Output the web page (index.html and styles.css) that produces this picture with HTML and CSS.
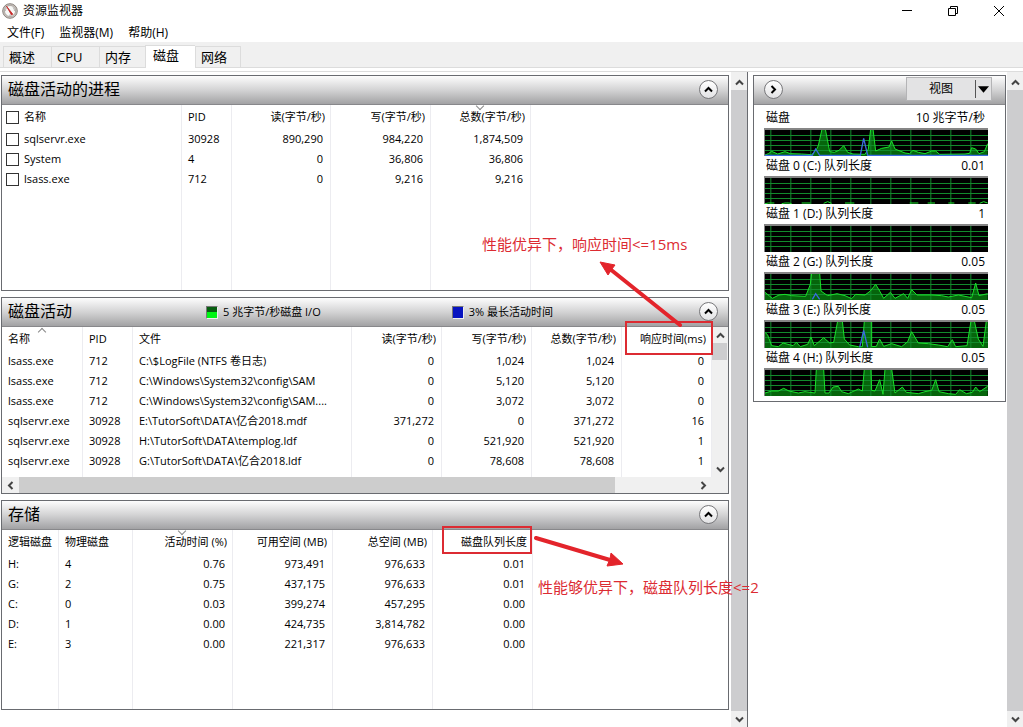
FILE: index.html
```html
<!DOCTYPE html>
<html lang="zh-CN">
	<head>
		<meta charset="utf-8">
		<title>资源监视器</title>
		<link rel="stylesheet" href="styles.css">
	</head>
	<body>
		<svg class="defs" width="0" height="0" aria-hidden="true">
			<defs>
				<pattern id="grid" width="60" height="81" x="16" patternUnits="userSpaceOnUse">
					<path d="M1.5 0V81M0 19.5H60M0 34.5H60M0 49.5H60M0 64.5H60" stroke="#128a2c" stroke-width="3" fill="none"/>
				</pattern>
			</defs>
			<symbol id="up" viewBox="0 0 9 9"><path d="M1 6.5L4.500 3L8 6.500" fill="none" stroke="currentColor" stroke-width="2"/></symbol>
			<symbol id="down" viewBox="0 0 9 9"><path d="M1 2.500L4.500 6L8 2.500" fill="none" stroke="currentColor" stroke-width="2"/></symbol>
			<symbol id="left" viewBox="0 0 9 9"><path d="M6.500 1L3 4.500L6.500 8" fill="none" stroke="currentColor" stroke-width="2"/></symbol>
			<symbol id="right" viewBox="0 0 9 9"><path d="M2.500 1L6 4.500L2.500 8" fill="none" stroke="currentColor" stroke-width="2"/></symbol>
		</svg>

		<header class="titlebar">
			<svg class="logo" viewBox="0 0 16 16" aria-hidden="true">
				<circle cx="8" cy="8" r="7.300" fill="#c9c3be" stroke="#8a837e"/>
				<circle cx="8" cy="8" r="5.500" fill="#f8f8f6" stroke="#8e8782" stroke-width=".6"/>
				<path d="M3.500 8a4.500 4.500 0 0 1 1-3M11 4.500A4.500 4.500 0 0 1 12.500 8M7 12.200h2" stroke="#aaa" fill="none" stroke-width=".8"/>
				<path d="M4.500 3.200L10.800 11.200L9.500 12Z" fill="#c42323" stroke="#c42323" stroke-width=".8"/>
			</svg>
			<h1>资源监视器</h1>
			<div class="window-buttons">
				<button aria-label="最小化"><svg viewBox="0 0 12 12"><path d="M1 5.500H11" /></svg></button>
				<button aria-label="还原"><svg viewBox="0 0 12 12"><path d="M1.500 3.500H8.500V10.500H1.500ZM3.500 3.500V1.500H10.500V8.500H8.500"/></svg></button>
				<button aria-label="关闭"><svg viewBox="0 0 12 12"><path d="M1 1L11 11M11 1L1 11"/></svg></button>
			</div>
		</header>
		<nav class="menu">
			<button>文件(F)</button>
			<button>监视器(M)</button>
			<button>帮助(H)</button>
		</nav>
		<div class="tabs" role="tablist">
			<button role="tab">概述</button>
			<button role="tab">CPU</button>
			<button role="tab">内存</button>
			<button role="tab" class="active" aria-selected="true">磁盘</button>
			<button role="tab">网络</button>
		</div>
		<div class="strip"></div>

		<main>
			<div class="panels">
				<section class="panel">
					<div class="panel-head">
						<h2>磁盘活动的进程</h2>
						<button class="round" aria-label="折叠"><svg><use href="#up"/></svg></button>
					</div>
					<table>
						<colgroup><col class="w180"><col class="w50"><col class="w99"><col class="w100"><col class="w100"><col></colgroup>
						<thead>
							<tr>
								<th><label><input type="checkbox">名称</label></th>
								<th>PID</th>
								<th class="num">读(字节/秒)</th>
								<th class="num">写(字节/秒)</th>
								<th class="num sort-down">总数(字节/秒)</th>
								<th></th>
							</tr>
						</thead>
						<tbody>
							<tr><td><label><input type="checkbox">sqlservr.exe</label></td><td>30928</td><td class="num">890,290</td><td class="num">984,220</td><td class="num">1,874,509</td><td></td></tr>
							<tr><td><label><input type="checkbox">System</label></td><td>4</td><td class="num">0</td><td class="num">36,806</td><td class="num">36,806</td><td></td></tr>
							<tr><td><label><input type="checkbox">lsass.exe</label></td><td>712</td><td class="num">0</td><td class="num">9,216</td><td class="num">9,216</td><td></td></tr>
							<tr class="rest tall"><td></td><td></td><td></td><td></td><td></td><td></td></tr>
						</tbody>
					</table>
				</section>

				<section class="panel">
					<div class="panel-head">
						<h2>磁盘活动</h2>
						<span class="legend"><i class="swatch green"></i>5 兆字节/秒磁盘 I/O</span>
						<span class="legend"><i class="swatch blue"></i>3% 最长活动时间</span>
						<button class="round" aria-label="折叠"><svg><use href="#up"/></svg></button>
					</div>
					<div class="scroll-area">
						<table class="activity">
							<colgroup><col class="w80"><col class="w50"><col><col class="w90"><col class="w90"><col class="w90"><col class="w90"></colgroup>
							<thead>
								<tr>
									<th class="sort-up">名称</th>
									<th>PID</th>
									<th>文件</th>
									<th class="num">读(字节/秒)</th>
									<th class="num">写(字节/秒)</th>
									<th class="num">总数(字节/秒)</th>
									<th class="num marked">响应时间(ms)</th>
								</tr>
							</thead>
							<tbody>
								<tr><td>lsass.exe</td><td>712</td><td>C:\$LogFile (NTFS 卷日志)</td><td class="num">0</td><td class="num">1,024</td><td class="num">1,024</td><td class="num">0</td></tr>
								<tr><td>lsass.exe</td><td>712</td><td>C:\Windows\System32\config\SAM</td><td class="num">0</td><td class="num">5,120</td><td class="num">5,120</td><td class="num">0</td></tr>
								<tr><td>lsass.exe</td><td>712</td><td>C:\Windows\System32\config\SAM....</td><td class="num">0</td><td class="num">3,072</td><td class="num">3,072</td><td class="num">0</td></tr>
								<tr><td>sqlservr.exe</td><td>30928</td><td>E:\TutorSoft\DATA\亿合2018.mdf</td><td class="num">371,272</td><td class="num">0</td><td class="num">371,272</td><td class="num">16</td></tr>
								<tr><td>sqlservr.exe</td><td>30928</td><td>H:\TutorSoft\DATA\templog.ldf</td><td class="num">0</td><td class="num">521,920</td><td class="num">521,920</td><td class="num">1</td></tr>
								<tr><td>sqlservr.exe</td><td>30928</td><td>G:\TutorSoft\DATA\亿合2018.ldf</td><td class="num">0</td><td class="num">78,608</td><td class="num">78,608</td><td class="num">1</td></tr>
								<tr class="rest"><td></td><td></td><td></td><td></td><td></td><td></td><td></td></tr>
							</tbody>
						</table>
						<div class="scrollbar inner">
							<button aria-label="向上"><svg><use href="#up"/></svg></button>
							<div class="thumb"></div>
							<button aria-label="向下"><svg><use href="#down"/></svg></button>
						</div>
					</div>
					<div class="hscroll">
						<button aria-label="向左"><svg><use href="#left"/></svg></button>
						<div class="thumb"></div>
						<button aria-label="向右"><svg><use href="#right"/></svg></button>
					</div>
				</section>

				<section class="panel">
					<div class="panel-head">
						<h2>存储</h2>
						<button class="round" aria-label="折叠"><svg><use href="#up"/></svg></button>
					</div>
					<table>
						<colgroup><col class="w56"><col class="w74"><col class="w100"><col class="w100"><col class="w100"><col class="w100"><col></colgroup>
						<thead>
							<tr>
								<th>逻辑磁盘</th>
								<th>物理磁盘</th>
								<th class="num sort-down">活动时间 (%)</th>
								<th class="num">可用空间 (MB)</th>
								<th class="num">总空间 (MB)</th>
								<th class="num marked">磁盘队列长度</th>
								<th></th>
							</tr>
						</thead>
						<tbody>
							<tr><td>H:</td><td>4</td><td class="num">0.76</td><td class="num">973,491</td><td class="num">976,633</td><td class="num">0.01</td><td></td></tr>
							<tr><td>G:</td><td>2</td><td class="num">0.75</td><td class="num">437,175</td><td class="num">976,633</td><td class="num">0.01</td><td></td></tr>
							<tr><td>C:</td><td>0</td><td class="num">0.03</td><td class="num">399,274</td><td class="num">457,295</td><td class="num">0.00</td><td></td></tr>
							<tr><td>D:</td><td>1</td><td class="num">0.00</td><td class="num">424,735</td><td class="num">3,814,782</td><td class="num">0.00</td><td></td></tr>
							<tr><td>E:</td><td>3</td><td class="num">0.00</td><td class="num">221,317</td><td class="num">976,633</td><td class="num">0.00</td><td></td></tr>
							<tr class="rest medium"><td></td><td></td><td></td><td></td><td></td><td></td><td></td></tr>
						</tbody>
					</table>
				</section>
			</div>

			<div class="scrollbar">
				<button aria-label="向上"><svg><use href="#up"/></svg></button>
				<div class="thumb"></div>
				<button aria-label="向下"><svg><use href="#down"/></svg></button>
			</div>

			<aside>
				<div class="panel">
					<div class="panel-head">
						<button class="round" aria-label="展开"><svg><use href="#right"/></svg></button>
						<div class="view">
							<button>视图</button>
							<button class="drop" aria-label="视图选项"><svg viewBox="0 0 10 6"><path d="M0 0H10L5 6Z"/></svg></button>
						</div>
					</div>
					<div class="charts">
						<div class="chart-label"><span>磁盘</span><span>10 兆字节/秒</span></div>
						<svg class="chart" viewBox="0 3 669 78" preserveAspectRatio="none">
							<path class="area" d="M0 78L10 74L20 67L38 75L60 68L76 74L110 75L140 77L154 62L160 50L171 0H181L194 68L208 70L222 64L236 50L248 70L264 75L300 76L310 60L317 0H324L332 66L350 58L372 54L380 36L390 60L420 72L434 74L444 64L460 70L480 74L500 66L512 66L524 76L600 75L614 73L620 56L632 60L642 74L658 68L668 44V81H0Z"/>
							<rect width="669" height="81" fill="url(#grid)"/>
							<path class="line" d="M0 78L10 74L20 67L38 75L60 68L76 74L110 75L140 77L154 62L160 50L171 0M181 0L194 68L208 70L222 64L236 50L248 70L264 75L300 76L310 60L317 0M324 0L332 66L350 58L372 54L380 36L390 60L420 72L434 74L444 64L460 70L480 74L500 66L512 66L524 76L600 75L614 73L620 56L632 60L642 74L658 68L668 44"/>
							<path class="busy" d="M0 79H142L152 60L164 79H286L296 28L308 79H669"/>
						</svg>
						<div class="chart-label"><span>磁盘 0 (C:) 队列长度</span><span>0.01</span></div>
						<svg class="chart" viewBox="0 3 669 78" preserveAspectRatio="none">
							<rect width="669" height="81" fill="url(#grid)"/>
							<path class="line" d="M0 80L10 78H28M50 80L60 78H72L80 80M110 78H136M176 79L188 74L200 79M240 78H268M434 78H460M488 78H510M550 78H568M610 78H632M644 79L656 74L668 78"/>
						</svg>
						<div class="chart-label"><span>磁盘 1 (D:) 队列长度</span><span>1</span></div>
						<svg class="chart" viewBox="0 3 669 78" preserveAspectRatio="none">
							<rect width="669" height="81" fill="url(#grid)"/>
						</svg>
						<div class="chart-label"><span>磁盘 2 (G:) 队列长度</span><span>0.05</span></div>
						<svg class="chart" viewBox="0 3 669 78" preserveAspectRatio="none">
							<path class="area" d="M0 58L22 76L42 66L60 64L80 68L122 70L136 34L140 0H164L168 54L188 68L216 62L240 68L260 77L272 64L300 66L316 54L332 34L344 54L356 76L376 58L390 76L416 62L428 76L440 50L456 66L500 66L530 68L550 72L580 66L620 74L632 30L642 68L668 62V81H0Z"/>
							<rect width="669" height="81" fill="url(#grid)"/>
							<path class="line" d="M0 58L22 76L42 66L60 64L80 68L122 70L136 34L140 0M164 0L168 54L188 68L216 62L240 68L260 77L272 64L300 66L316 54L332 34L344 54L356 76L376 58L390 76L416 62L428 76L440 50L456 66L500 66L530 68L550 72L580 66L620 74L632 30L642 68L668 62"/>
							<path class="busy" d="M142 79L152 62L164 79"/>
						</svg>
						<div class="chart-label"><span>磁盘 3 (E:) 队列长度</span><span>0.05</span></div>
						<svg class="chart" viewBox="0 3 669 78" preserveAspectRatio="none">
							<path class="area" d="M0 34L8 42L20 74L40 77L54 66L84 74L94 64L106 77L128 70L138 48L148 74L176 50L194 66L206 64L218 0H232L238 54L254 72L280 77H292L298 0H320V77L334 76L344 54L356 76L380 68L410 77L428 62L440 32L460 66L490 68L520 72L548 77L562 56L572 77L606 74L618 0H628L640 54L654 76L664 0H669V81H0Z"/>
							<rect width="669" height="81" fill="url(#grid)"/>
							<path class="line" d="M0 34L8 42L20 74L40 77L54 66L84 74L94 64L106 77L128 70L138 48L148 74L176 50L194 66L206 64L218 0M232 0L238 54L254 72L280 77H292L298 0M320 0V77L334 76L344 54L356 76L380 68L410 77L428 62L440 32L460 66L490 68L520 72L548 77L562 56L572 77L606 74L618 0M628 0L640 54L654 76L664 0"/>
							<path class="busy" d="M284 79L296 28L308 79"/>
						</svg>
						<div class="chart-label"><span>磁盘 4 (H:) 队列长度</span><span>0.05</span></div>
						<svg class="chart" viewBox="0 3 669 78" preserveAspectRatio="none">
							<path class="area" d="M0 72L20 66L40 66L56 58L72 66L100 72L120 68L150 72L154 0H176L180 72H192L204 54L220 52L230 68L250 74L280 60L292 66L298 0H318L320 64L330 66L344 32L354 76L360 0H380L390 72L412 54L424 70L460 74L480 68L500 64L512 32L522 68L550 74L572 76L584 62L604 74L622 70L632 54L644 68L668 52V81H0Z"/>
							<rect width="669" height="81" fill="url(#grid)"/>
							<path class="line" d="M0 72L20 66L40 66L56 58L72 66L100 72L120 68L150 72L154 0M176 0L180 72H192L204 54L220 52L230 68L250 74L280 60L292 66L298 0M318 0L320 64L330 66L344 32L354 76L360 0M380 0L390 72L412 54L424 70L460 74L480 68L500 64L512 32L522 68L550 74L572 76L584 62L604 74L622 70L632 54L644 68L668 52"/>
						</svg>
					</div>
				</div>
			</aside>

			<div class="scrollbar">
				<button aria-label="向上"><svg><use href="#up"/></svg></button>
				<div class="thumb"></div>
				<button aria-label="向下"><svg><use href="#down"/></svg></button>
			</div>
		</main>

		<!-- notes drawn over the window -->
		<svg class="arrows" width="740" height="600" aria-hidden="true">
			<path d="M680 325L610 269M536 538L610 560" stroke="#e3242b" stroke-width="4" stroke-linecap="round"/>
			<path d="M600 262L615 265L612 269L608 275ZM623 564L611 553L610 559L607 566Z" fill="#e3242b" stroke="#e3242b"/>
		</svg>
		<p class="note response">性能优异下，响应时间&lt;=15ms</p>
		<p class="note queue">性能够优异下，磁盘队列长度&lt;=2</p>
	</body>
</html>
```
FILE: styles.css
```css
* {
	box-sizing: border-box;
}

body {
	margin: 0;
	height: 100vh;
	display: flex;
	flex-direction: column;
	position: relative;
	overflow: hidden;
	background-color: #fff;
	color: #000;
	font-family: "Open Sans", "Noto Sans CJK SC", sans-serif;
	font-size: 11px;
	line-height: 16px;
}

h1, h2, p {
	margin: 0;
	font-weight: normal;
}

button {
	margin: 0;
	padding: 0;
	border: none;
	background: none;
	color: inherit;
	font: inherit;
}

svg {
	display: block;
}

.defs {
	position: absolute;
}

/* window frame */

.titlebar {
	display: flex;
	align-items: center;
	height: 22px;
	padding-left: 2px;
}

.titlebar h1 {
	margin-left: 5px;
	font-size: 12px;
}

.logo {
	width: 16px;
	height: 16px;
}

.window-buttons {
	display: flex;
	margin-left: auto;
}

.window-buttons button {
	width: 46px;
	height: 22px;
	padding-left: 16px;
}

.window-buttons svg {
	width: 12px;
	height: 12px;
	fill: none;
	stroke: #000;
}

.menu {
	display: flex;
	gap: 15px;
	height: 20px;
	padding-top: 1px;
	padding-left: 7px;
	font-size: 12px;
}

.tabs {
	display: flex;
	align-items: flex-end;
	height: 26px;
	padding-left: 3px;
	background-color: #f0f0f0;
	border-bottom: 1px solid #dcdcdc;
	font-size: 13px;
}

.tabs button {
	width: 48px;
	height: 21px;
	padding-left: 5px;
	border: 1px solid #dcdcdc;
	border-right: none;
	border-bottom: none;
	text-align: left;
}

.tabs button:last-child {
	width: 46px;
	border-right: 1px solid #dcdcdc;
}

.tabs .active {
	height: 23px;
	margin-bottom: -1px;
	margin-left: -2px;
	padding-left: 7px;
	padding-bottom: 4px;
	width: 50px;
	background-color: #fff;
}

.strip {
	height: 4px;
	border-bottom: 1px solid #dcdcdc;
}

main {
	display: flex;
	flex: 1;
	min-height: 0;
	padding-left: 1px;
}

/* panels */

.panels {
	flex: 1;
	min-width: 0;
	display: flex;
	flex-direction: column;
	gap: 6px;
	padding-top: 3px;
	padding-right: 2px;
}

.panel {
	border: 1px solid #696b70;
}

.panel-head {
	display: flex;
	align-items: center;
	height: 29px;
	padding: 0 10px 2px 6px;
	border-bottom: 1px solid #88888b;
	background-image: linear-gradient(#fdfdfd, #d3d3d4 50%, #a2a2a4);
}

.panel-head h2 {
	flex: none;
	width: 198px;
	font-size: 16px;
	line-height: 24px;
}

.round {
	display: flex;
	align-items: center;
	justify-content: center;
	flex: none;
	width: 19px;
	height: 19px;
	margin-left: auto;
	border: 1px solid #77777a;
	border-radius: 50%;
	background-image: linear-gradient(#fff, #e2e2e4);
}

.round svg {
	width: 9px;
	height: 9px;
}

.legend {
	display: flex;
	align-items: center;
	flex: none;
	margin-top: 2px;
}

.legend + .legend {
	margin-left: 131px;
}

.swatch {
	width: 12px;
	height: 13px;
	margin-right: 5px;
	border: 1px solid #777;
	border-right-color: #eee;
	border-bottom-color: #eee;
}

.green {
	background-image: linear-gradient(#075e10 50%, #00f514 50%);
}

.blue {
	background-color: #0713c0;
}

table {
	width: 100%;
	border-spacing: 0;
	table-layout: fixed;
}

.w50 { width: 50px; }
.w56 { width: 57px; }
.w74 { width: 74px; }
.w80 { width: 81px; }
.w90 { width: 90px; }
.w99 { width: 99px; }
.w100 { width: 100px; }
.w180 { width: 180px; }

th, td {
	height: 20px;
	padding: 0 7px 0 6px;
	border-right: 1px solid #ececf0;
	font-weight: normal;
	text-align: left;
	white-space: nowrap;
}

th {
	position: relative;
	height: 24px;
	padding-right: 5px;
}

th:last-child, td:last-child {
	border-right: none;
}

.activity th:last-child, .activity td:last-child {
	border-right: 1px solid #ececf0;
}

.num {
	text-align: right;
}

.rest td {
	height: 6px;
}

.rest.tall td {
	height: 101px;
}

.rest.medium td {
	height: 55px;
}

label {
	display: flex;
	align-items: center;
	gap: 5px;
	margin-left: -2px;
}

input[type="checkbox"] {
	appearance: none;
	width: 13px;
	height: 13px;
	margin: 0;
	border: 1px solid #333;
	background-color: #fff;
}

.sort-down::before, .sort-up::before {
	content: "";
	position: absolute;
	top: -2px;
	left: 46%;
	width: 5px;
	height: 5px;
	border: solid #888;
	border-width: 0 1px 1px 0;
	transform: rotate(45deg);
}

.sort-up::before {
	top: 2px;
	transform: rotate(225deg);
}

/* red frame round a column heading */
.marked::after {
	content: "";
	position: absolute;
	inset: -4px 0 0 9px;
	border: 2px solid #dc2b32;
}

.activity .marked::after {
	inset: -6px -2px -4px 3px;
}

/* scrollbars */

.scroll-area {
	display: flex;
}

.scrollbar {
	display: flex;
	flex-direction: column;
	flex: none;
	width: 16px;
	padding-top: 2px;
	background-color: #f0f0f0;
	color: #444;
}

.scrollbar button {
	display: flex;
	align-items: center;
	justify-content: center;
	height: 16px;
}

.scrollbar svg, .hscroll svg {
	width: 9px;
	height: 9px;
}

.scrollbar .thumb {
	flex: 1;
	background-color: #cdcdcf;
}

.scrollbar.inner {
	padding-top: 0;
}

.inner .thumb {
	flex: none;
	height: 17px;
	margin-right: 1px;
	margin-bottom: auto;
}

.hscroll {
	display: flex;
	padding-right: 16px;
	background-color: #f0f0f0;
	color: #444;
}

.hscroll button {
	display: flex;
	align-items: center;
	justify-content: center;
	width: 17px;
	height: 16px;
}

.hscroll .thumb {
	width: 84%;
	margin-right: auto;
	background-color: #cdcdcd;
}

/* graphs */

aside {
	flex: none;
	width: 260px;
	padding: 3px 1px 0 5px;
	border-left: 1px solid #696b70;
}

aside .round {
	margin-left: 4px;
}

.view {
	display: flex;
	width: 86px;
	height: 24px;
	margin-left: auto;
	margin-right: 3px;
	border: 1px solid #b4b4b6;
	background-color: #e3e3e4;
	font-size: 12px;
}

.view button {
	flex: 1;
}

.view .drop {
	flex: none;
	width: 16px;
	height: 18px;
	margin: 2px 0;
	padding-left: 2px;
	border-left: 1px solid #555;
}

.drop svg {
	width: 11px;
	height: 7px;
}

.charts {
	padding: 3px 17px 5px 10px;
}

.chart-label {
	display: flex;
	justify-content: space-between;
	height: 20px;
	padding: 0 3px 0 2px;
	font-size: 12px;
	line-height: 20px;
}

.chart {
	width: 100%;
	height: 28px;
	border-top: 2px solid #858585;
	border-left: 1px solid #858585;
	background-color: #000;
}

.area {
	fill: #06650c;
}

.line {
	fill: none;
	stroke: #1ae02a;
	stroke-width: 3;
}

.busy {
	fill: none;
	stroke: #3a6be0;
	stroke-width: 4;
}

/* notes */

.arrows {
	position: absolute;
	top: 0;
	left: 0;
	pointer-events: none;
}

.note {
	position: absolute;
	color: #dc2b32;
	font-size: 15px;
	line-height: 20px;
	white-space: nowrap;
}

.response {
	top: 234px;
	left: 482px;
}

.queue {
	top: 577px;
	left: 538px;
}
```
